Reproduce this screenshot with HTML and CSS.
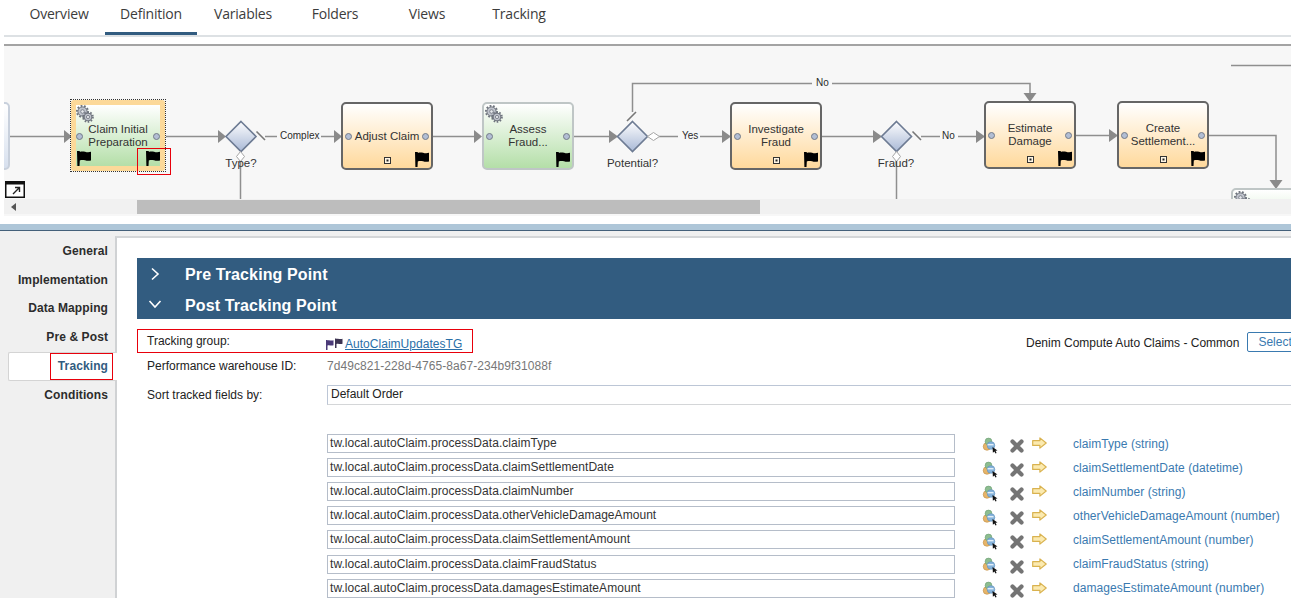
FILE: index.html
```html
<!DOCTYPE html>
<html>
<head>
<meta charset="utf-8">
<title>Definition - Tracking</title>
<link rel="stylesheet" href="styles.css">
</head>
<body>
<svg class="defs" width="0" height="0">
    <symbol id="flag" viewBox="0 0 14 16">
        <path d="M0 1h2.800v1c3.600-1.600 6.600 1.300 11.200-.2v8.600c-4.600 1.500-7.600-1.400-11.200.2l-.3 5.400H.4z" fill="#000"/>
    </symbol>
    <symbol id="gears" viewBox="0 0 18 18">
        <g fill="#bfc3cc" stroke="#6f747e">
            <circle cx="6.500" cy="6.500" r="4.600" stroke-width="1"/>
            <circle cx="6.500" cy="6.500" r="5.600" fill="none" stroke-width="1.900" stroke-dasharray="1.800 1.600"/>
            <circle cx="12" cy="12" r="3.900" stroke-width="1"/>
            <circle cx="12" cy="12" r="4.900" fill="none" stroke-width="1.800" stroke-dasharray="1.600 1.500"/>
            <circle cx="6.500" cy="6.500" r="1.800" fill="#e6e8ec" stroke-width=".8"/>
            <circle cx="12" cy="12" r="1.600" fill="#e6e8ec" stroke-width=".8"/>
        </g>
    </symbol>
    <symbol id="sub" viewBox="0 0 7 7">
        <rect x=".5" y=".5" width="6" height="6" fill="#fff6e5" stroke="#333"/>
        <rect x="2.500" y="2.500" width="2" height="2" fill="#222"/>
    </symbol>
    <symbol id="pick" viewBox="0 0 17 17">
        <circle cx="5" cy="9.500" r="3.800" fill="#e6b469" stroke="#c08f45" stroke-width=".6"/>
        <circle cx="6.500" cy="4.500" r="3.400" fill="#8dbd90" stroke="#6a9c72" stroke-width=".6"/>
        <circle cx="9" cy="8.500" r="3.800" fill="#86b3db" stroke="#5a8dbb" stroke-width=".6"/>
        <rect x="5.500" y="7" width="6" height="1.400" fill="#e2eef7"/>
        <path d="M10.500 10l5 3.400-2 .4 1.100 2.200-1.100.6-1.100-2.200-1.500 1.300z" fill="#111"/>
    </symbol>
    <symbol id="cross" viewBox="0 0 14 14">
        <path d="M2.500 2.500l9 9M11.500 2.500l-9 9" stroke="#747474" stroke-width="4.200" stroke-linecap="round"/>
    </symbol>
    <symbol id="goto" viewBox="0 0 15 12">
        <path d="M.7 3.600h7.200V.9L14.200 6l-6.300 5.100V8.400H.7z" fill="#fbeab0" stroke="#d9b24f" stroke-width="1.200" stroke-linejoin="round"/>
    </symbol>
    <linearGradient id="gw" x1="0" y1="0" x2="0" y2="1">
        <stop offset="0" stop-color="#fdfdfe"/>
        <stop offset="1" stop-color="#a9b9d6"/>
    </linearGradient>
</svg>

<div class="tabs">
    <div class="tab">Overview</div>
    <div class="tab active">Definition</div>
    <div class="tab">Variables</div>
    <div class="tab">Folders</div>
    <div class="tab">Views</div>
    <div class="tab">Tracking</div>
</div>

<div class="diagram">
    <div class="canvas">
        <svg class="edges" width="1287" height="155" viewBox="4 45 1287 155">
            <g fill="none" stroke="#8f8f8f" stroke-width="1.500">
                <path d="M10 135.500H66"/>
                <path d="M166 135.500H220"/>
                <path d="M265 135.500H277M321 135.500H335"/>
                <path d="M433 135.500H476"/>
                <path d="M573 135.500H611"/>
                <path d="M632.500 111V82.500H812M832 82.500H1030V94"/>
                <path d="M659 135.500H678M700 135.500H724"/>
                <path d="M821 135.500H875"/>
                <path d="M921 135.500H940M958 135.500H978"/>
                <path d="M1075 134.500H1111"/>
                <path d="M1208 134.500H1276V182"/>
                <path d="M1231 64.500H1291"/>
                <path d="M240.500 160V200M896.500 160V200"/>
            </g>
            <g fill="#8a8a8a">
                <path d="M64 129l8 6.500-8 6.500z"/>
                <path d="M218 129l8 6.500-8 6.500z"/>
                <path d="M334 129l8 6.500-8 6.500z"/>
                <path d="M474 129l8 6.500-8 6.500z"/>
                <path d="M609 129l9 6.500-9 6.500z"/>
                <path d="M722 129l9 6.500-9 6.500z"/>
                <path d="M873 129l9 6.500-9 6.500z"/>
                <path d="M976 129l9 6.500-9 6.500z"/>
                <path d="M1109 128l9 6.500-9 6.500z"/>
                <path d="M1023.500 92l6.500 9 6.500-9z"/>
                <path d="M1269.500 179l6.500 9 6.500-9z"/>
            </g>
            <g fill="url(#gw)" stroke="#6d7b93" stroke-width="1.600">
                <path d="M241 120.500l15 15-15 15-15-15z"/>
                <path d="M632.500 120.500l15 15-15 15-15-15z"/>
                <path d="M896.500 120.500l15 15-15 15-15-15z"/>
            </g>
            <g fill="#fff" stroke="#a5a5a5">
                <path d="M240.500 150.500l4 5-4 5-4-5z"/>
                <path d="M896.500 150.500l4 5-4 5-4-5z"/>
                <path d="M647.500 135.500l6-4 6 4-6 4z"/>
            </g>
            <g stroke="#777" stroke-width="1.600">
                <path d="M256.500 130.500l8.500 8.500"/>
                <path d="M627 120l9-9"/>
                <path d="M912.500 130.500l8.500 8.500"/>
            </g>
        </svg>

        <div class="node left-stub"></div>

        <div class="selection">
            <div class="node task-auto wide-border">
                <svg class="gears"><use href="#gears"/></svg>
                <span class="port port-in"></span><span class="port port-out"></span>
                <div class="node-label">Claim Initial<br>Preparation</div>
                <svg class="flag flag-left"><use href="#flag"/></svg>
                <svg class="flag"><use href="#flag"/></svg>
            </div>
        </div>

        <div class="node task-user n-adjust">
            <span class="port port-in"></span><span class="port port-out"></span>
            <div class="node-label">Adjust Claim</div>
            <svg class="sub"><use href="#sub"/></svg>
            <svg class="flag"><use href="#flag"/></svg>
        </div>

        <div class="node task-auto n-assess">
            <svg class="gears"><use href="#gears"/></svg>
            <span class="port port-in"></span><span class="port port-out"></span>
            <div class="node-label">Assess<br>Fraud...</div>
            <svg class="flag"><use href="#flag"/></svg>
        </div>

        <div class="node task-user n-investigate">
            <span class="port port-in"></span><span class="port port-out"></span>
            <div class="node-label">Investigate<br>Fraud</div>
            <svg class="sub"><use href="#sub"/></svg>
            <svg class="flag"><use href="#flag"/></svg>
        </div>

        <div class="node task-user n-estimate">
            <span class="port port-in"></span><span class="port port-out"></span>
            <div class="node-label">Estimate<br>Damage</div>
            <svg class="sub"><use href="#sub"/></svg>
            <svg class="flag"><use href="#flag"/></svg>
        </div>

        <div class="node task-user n-create">
            <span class="port port-in"></span><span class="port port-out"></span>
            <div class="node-label">Create<br>Settlement...</div>
            <svg class="sub"><use href="#sub"/></svg>
            <svg class="flag"><use href="#flag"/></svg>
        </div>

        <div class="node task-auto n-next">
            <svg class="gears"><use href="#gears"/></svg>
        </div>

        <div class="gw-label gw-type">Type?</div>
        <div class="gw-label gw-potential">Potential?</div>
        <div class="gw-label gw-fraud">Fraud?</div>

        <div class="edge-label e-complex">Complex</div>
        <div class="edge-label e-yes">Yes</div>
        <div class="edge-label e-no1">No</div>
        <div class="edge-label e-no2">No</div>

        <svg class="expand" width="20" height="17" viewBox="0 0 20 17">
            <rect x=".75" y=".75" width="18.500" height="15.500" fill="#fff" stroke="#111" stroke-width="1.500"/>
            <rect x="1" y="1" width="18" height="2.500" fill="#111"/>
            <path d="M8 13l6-6M10 6.500h4.500V11" fill="none" stroke="#222" stroke-width="1.400"/>
        </svg>
    </div>
    <div class="hscroll">
        <span class="hscroll-arrow"></span>
        <div class="hscroll-thumb"></div>
    </div>
</div>

<div class="band"></div>

<div class="props">
    <div class="side">
        <div class="side-item">General</div>
        <div class="side-item">Implementation</div>
        <div class="side-item">Data Mapping</div>
        <div class="side-item">Pre &amp; Post</div>
        <div class="side-item current">Tracking</div>
        <div class="side-item">Conditions</div>
        <div class="mark mark-side"></div>
    </div>
    <div class="main">
        <div class="section-head">
            <svg width="10" height="14" viewBox="0 0 10 14"><path d="M2 1.500l6 5.500-6 5.500" fill="none" stroke="#fff" stroke-width="1.600"/></svg>
            <span>Pre Tracking Point</span>
        </div>
        <div class="section-head post">
            <svg width="14" height="10" viewBox="0 0 14 10"><path d="M1.500 2l5.500 6 5.500-6" fill="none" stroke="#fff" stroke-width="1.600"/></svg>
            <span>Post Tracking Point</span>
        </div>

        <div class="form">
            <div class="form-row first">
                <div class="form-label">Tracking group:</div>
                <div class="group-value">
                    <svg width="18" height="12" viewBox="0 0 18 12">
                        <path d="M0 2h1.500v.5c2-.8 3.500.6 6-.2v5c-2.500.8-4-.6-6 .2V12H0z" fill="#4b3a78"/>
                        <path d="M9 .5h1.500V1c2-.8 3.500.6 6-.2v5c-2.500.8-4-.6-6 .2v4H9z" fill="#3d3452"/>
                    </svg>
                    <a class="group-link" href="#">AutoClaimUpdatesTG</a>
                </div>
                <div class="group-project">
                    <span>Denim Compute Auto Claims - Common</span>
                    <button class="select-btn">Select...</button>
                </div>
                <div class="mark mark-group"></div>
            </div>
            <div class="form-row">
                <div class="form-label">Performance warehouse ID:</div>
                <div class="warehouse-id">7d49c821-228d-4765-8a67-234b9f31088f</div>
            </div>
            <div class="form-row sort">
                <div class="form-label">Sort tracked fields by:</div>
                <div class="sort-select">Default Order</div>
            </div>

            <div class="fields">
                <div class="field-row">
                    <div class="field-input">tw.local.autoClaim.processData.claimType</div>
                    <div class="field-icons"><svg class="i-pick"><use href="#pick"/></svg><svg class="i-cross"><use href="#cross"/></svg><svg class="i-goto"><use href="#goto"/></svg></div>
                    <div class="field-name">claimType (string)</div>
                </div>
                <div class="field-row">
                    <div class="field-input">tw.local.autoClaim.processData.claimSettlementDate</div>
                    <div class="field-icons"><svg class="i-pick"><use href="#pick"/></svg><svg class="i-cross"><use href="#cross"/></svg><svg class="i-goto"><use href="#goto"/></svg></div>
                    <div class="field-name">claimSettlementDate (datetime)</div>
                </div>
                <div class="field-row">
                    <div class="field-input">tw.local.autoClaim.processData.claimNumber</div>
                    <div class="field-icons"><svg class="i-pick"><use href="#pick"/></svg><svg class="i-cross"><use href="#cross"/></svg><svg class="i-goto"><use href="#goto"/></svg></div>
                    <div class="field-name">claimNumber (string)</div>
                </div>
                <div class="field-row">
                    <div class="field-input">tw.local.autoClaim.processData.otherVehicleDamageAmount</div>
                    <div class="field-icons"><svg class="i-pick"><use href="#pick"/></svg><svg class="i-cross"><use href="#cross"/></svg><svg class="i-goto"><use href="#goto"/></svg></div>
                    <div class="field-name">otherVehicleDamageAmount (number)</div>
                </div>
                <div class="field-row">
                    <div class="field-input">tw.local.autoClaim.processData.claimSettlementAmount</div>
                    <div class="field-icons"><svg class="i-pick"><use href="#pick"/></svg><svg class="i-cross"><use href="#cross"/></svg><svg class="i-goto"><use href="#goto"/></svg></div>
                    <div class="field-name">claimSettlementAmount (number)</div>
                </div>
                <div class="field-row">
                    <div class="field-input">tw.local.autoClaim.processData.claimFraudStatus</div>
                    <div class="field-icons"><svg class="i-pick"><use href="#pick"/></svg><svg class="i-cross"><use href="#cross"/></svg><svg class="i-goto"><use href="#goto"/></svg></div>
                    <div class="field-name">claimFraudStatus (string)</div>
                </div>
                <div class="field-row">
                    <div class="field-input">tw.local.autoClaim.processData.damagesEstimateAmount</div>
                    <div class="field-icons"><svg class="i-pick"><use href="#pick"/></svg><svg class="i-cross"><use href="#cross"/></svg><svg class="i-goto"><use href="#goto"/></svg></div>
                    <div class="field-name">damagesEstimateAmount (number)</div>
                </div>
            </div>
        </div>
    </div>
</div>

<div class="mark mark-flag"></div>
</body>
</html>
```

FILE: styles.css
```css
html, body {
    margin: 0;
    height: 598px;
    overflow: hidden;
    background: #fff;
}

body {
    position: relative;
    width: 1291px;
    font-family: "Liberation Sans", Arial, sans-serif;
    font-size: 12px;
    color: #222;
}

.defs {
    position: absolute;
}

/* top tabs */
.tabs {
    display: flex;
    height: 35px;
    margin-left: 4px;
    padding-left: 9px;
    border-bottom: 2px solid #dde1e4;
    box-sizing: content-box;
}

.tab {
    width: 92px;
    height: 28px;
    line-height: 28px;
    text-align: center;
    font-family: "Open Sans", sans-serif;
    font-size: 14px;
    letter-spacing: -0.2px;
    color: #3c3c3c;
}

.tab.active {
    height: 32px;
    border-bottom: 3px solid #325c80;
}

/* process diagram */
.diagram {
    margin: 7px 0 8px 4px;
    border-top: 2px solid #a3a3a3;
    height: 170px;
    background: #f7f7f7;
}

.canvas {
    position: relative;
    height: 153px;
    overflow: hidden;
}

.edges {
    position: absolute;
    left: 0;
    top: 0;
}

.node {
    position: absolute;
    box-sizing: border-box;
    width: 92px;
    height: 68px;
    top: 56px;
    border-radius: 5px;
}

.left-stub {
    left: -40px;
    width: 46px;
    border: 2px solid #c8d0dc;
    background: linear-gradient(#fff, #d7e0ee);
}

.selection {
    position: absolute;
    left: 66px;
    top: 53px;
    width: 96px;
    height: 73px;
    box-sizing: border-box;
    border: 1px dotted #333;
}

.task-auto {
    border: 2px solid #bfc6c6;
    background: linear-gradient(#fff, #b4dfa8);
}

.task-auto.wide-border {
    left: 0;
    top: 0;
    width: 94px;
    height: 71px;
    border: 5px solid #fcd999;
    border-radius: 3px;
}

.task-user {
    border: 2px solid #666;
    background: linear-gradient(#fff, #ffd99c);
}

.n-adjust { left: 337px; }
.n-assess { left: 478px; }
.n-investigate { left: 726px; }
.n-estimate { left: 980px; top: 55px; }
.n-create { left: 1113px; top: 55px; }
.n-next { left: 1227px; top: 142px; width: 80px; }

.node-label {
    display: flex;
    align-items: center;
    justify-content: center;
    text-align: center;
    height: 100%;
    padding-bottom: 2px;
    box-sizing: border-box;
    line-height: 13px;
    font-size: 11.500px;
    color: #333;
    margin-top: 1px;
}

.gears {
    position: absolute;
    left: 1px;
    top: 1px;
    width: 18px;
    height: 18px;
}

.wide-border .gears {
    left: 0;
    top: 0;
}

.port {
    position: absolute;
    top: 50%;
    width: 5px;
    height: 5px;
    margin-top: -3px;
    border-radius: 50%;
    background: #b2bed4;
    border: 1px solid #737b88;
    box-sizing: content-box;
}

.port-in { left: 2px; }
.port-out { right: 2px; }

.wide-border .port-in { left: 0; }
.wide-border .port-out { right: 0; }

.flag {
    position: absolute;
    right: 2px;
    bottom: 1px;
    width: 14px;
    height: 16px;
}

.flag-left {
    right: auto;
    left: 1px;
}

.wide-border .flag { bottom: 0; right: 0; }
.wide-border .flag-left { left: 1px; right: auto; }

.sub {
    position: absolute;
    left: 41px;
    bottom: 4px;
    width: 7px;
    height: 7px;
}

.gw-label {
    position: absolute;
    top: 110px;
    width: 80px;
    text-align: center;
    font-size: 11.500px;
    line-height: 14px;
    color: #333;
}

.gw-type { left: 197px; }
.gw-potential { left: 588.500px; }
.gw-fraud { left: 852px; }

.edge-label {
    position: absolute;
    font-size: 10px;
    line-height: 12px;
    color: #2b2b2b;
}

.e-complex { left: 276px; top: 84px; }
.e-yes { left: 678px; top: 84px; }
.e-no1 { left: 812px; top: 31px; }
.e-no2 { left: 938px; top: 84px; }

.expand {
    position: absolute;
    left: 1px;
    top: 135px;
}

.hscroll {
    position: relative;
    height: 15px;
    background: #f1f1f1;
}

.hscroll-arrow {
    position: absolute;
    left: 7px;
    top: 4px;
    border: 4px solid transparent;
    border-left: 0;
    border-right: 5px solid #555;
}

.hscroll-thumb {
    position: absolute;
    left: 133px;
    top: 1px;
    width: 623px;
    height: 14px;
    background: #bdbdbd;
}

.band {
    height: 6px;
    background: #aec6d8;
    border-bottom: 1px solid #44607a;
}

/* property panel */
.props {
    display: flex;
    height: 367px;
    background: #f0f0f0;
}

.side {
    position: relative;
    box-sizing: border-box;
    width: 115px;
    padding-top: 6px;
    padding-left: 8px;
}

.side-item {
    height: 28.700px;
    line-height: 28.700px;
    padding-right: 7px;
    text-align: right;
    font-weight: bold;
    font-size: 12px;
    letter-spacing: .1px;
    color: #2c2c2c;
}

.side-item.current {
    position: relative;
    z-index: 1;
    margin-right: -2px;
    padding-right: 9px;
    background: #fff;
    border: 1px solid #d4d4d4;
    border-right: 0;
    border-radius: 2px 0 0 2px;
    box-sizing: border-box;
    height: 29px;
    line-height: 27px;
    color: #325c80;
}

.main {
    flex: 1;
    min-width: 0;
    margin-top: 5px;
    padding: 20px 0 0 20px;
    background: #fff;
    border-top: 2px solid #d4d6d8;
    border-left: 2px solid #d0d2d4;
    box-sizing: border-box;
    height: 362px;
    overflow: hidden;
}

.section-head {
    display: flex;
    align-items: center;
    height: 31px;
    background: #325c80;
    color: #fff;
    font-weight: bold;
    font-size: 16px;
    letter-spacing: .12px;
}

.section-head span {
    padding-top: 3px;
}

.section-head.post {
    height: 30px;
}

.section-head svg {
    flex: none;
    width: 14px;
    margin-left: 11px;
    margin-right: 23px;
}

.form {
    padding-left: 10px;
}

.form-row {
    position: relative;
    display: flex;
    align-items: center;
    height: 25px;
}

.form-row.first {
    height: 24px;
    margin-top: 10px;
}

.form-row.first .form-label {
    margin-top: 0;
}

.form-row.sort {
    margin-top: 4px;
}

.form-label {
    flex: none;
    width: 180px;
}

.group-value {
    display: flex;
    align-items: center;
    gap: 1px;
    margin: 5px 0 0 -1px;
}

.group-link {
    color: #2a6fa8;
    font-size: 12px;
    letter-spacing: .03px;
}

.group-project {
    position: absolute;
    left: 879px;
    top: 7px;
    display: flex;
    align-items: flex-start;
    white-space: nowrap;
    gap: 8px;
}

.select-btn {
    box-sizing: border-box;
    width: 60px;
    height: 20px;
    padding: 0 0 0 10px;
    margin-top: -4px;
    text-align: left;
    background: #fff;
    border: 1px solid #3a7ab0;
    border-radius: 2px;
    color: #3a7ab0;
    font: 12px "Liberation Sans", Arial, sans-serif;
}

.warehouse-id {
    color: #777;
    letter-spacing: .06px;
}

.sort-select {
    flex: 1;
    box-sizing: border-box;
    height: 20px;
    line-height: 17px;
    padding-left: 3px;
    border: 1px solid #bcc6d6;
    border-bottom-color: #d4d6d8;
    border-right: 0;
}

.fields {
    display: grid;
    gap: 5px;
    margin-top: 27px;
}

.field-row {
    display: flex;
    align-items: center;
    height: 19.100px;
}

.field-input {
    flex: none;
    box-sizing: border-box;
    width: 628px;
    height: 19px;
    margin-left: 180px;
    padding-left: 2px;
    line-height: 17px;
    letter-spacing: .05px;
    border: 1px solid #b5bdc9;
    color: #333;
}

.field-icons {
    display: flex;
    align-items: center;
    flex: none;
    width: 118px;
    padding-left: 27px;
    box-sizing: border-box;
}

.i-pick {
    width: 17px;
    height: 17px;
    margin-top: 3px;
}

.i-cross {
    width: 14px;
    height: 14px;
    margin: 5px 0 0 11px;
}

.i-goto {
    width: 15px;
    height: 12px;
    margin: -1px 0 0 8px;
}

.field-name {
    color: #3a7ab0;
    white-space: nowrap;
    letter-spacing: .06px;
}

/* red review marks */
.mark {
    position: absolute;
    box-sizing: border-box;
    border: 1px solid #e8000b;
    pointer-events: none;
}

.mark-flag {
    left: 137px;
    top: 148px;
    width: 34px;
    height: 27px;
}

.mark-side {
    z-index: 2;
    left: 50px;
    top: 122px;
    width: 63px;
    height: 27px;
}

.mark-group {
    left: -10px;
    top: 0;
    width: 336px;
    height: 24px;
}
```
